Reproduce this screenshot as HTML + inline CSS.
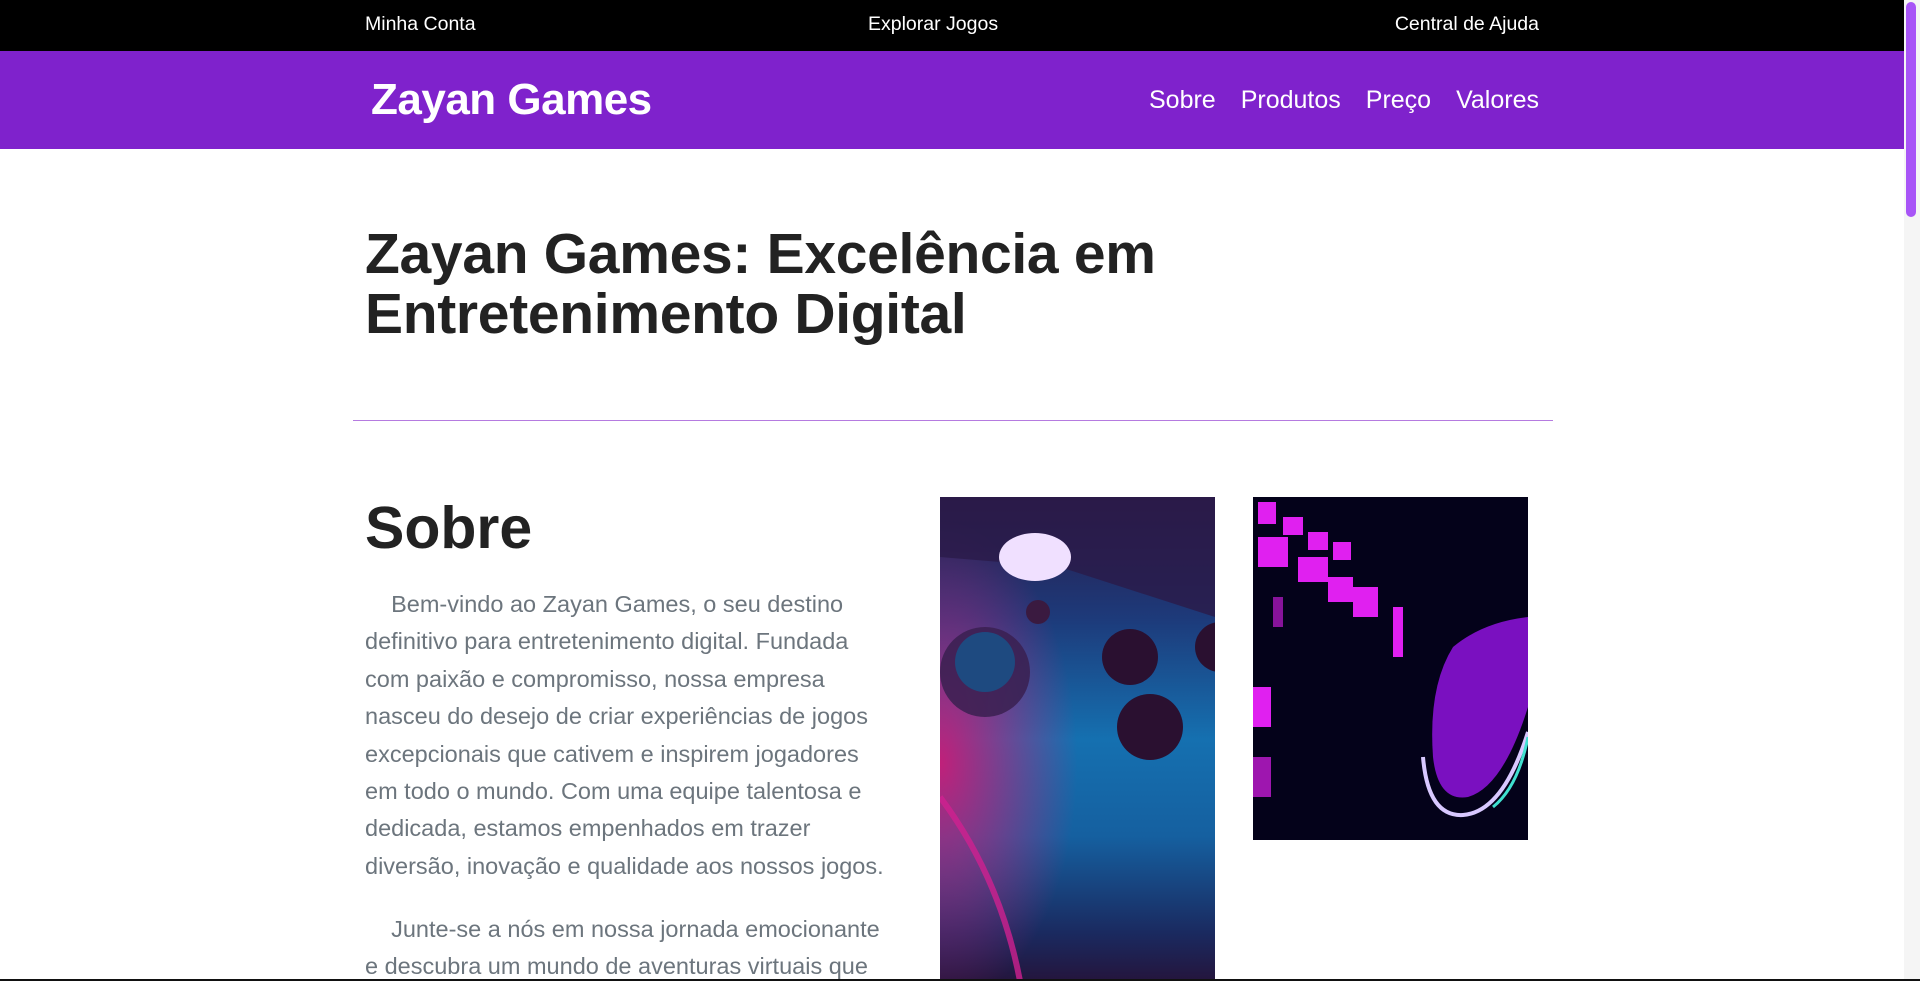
<!DOCTYPE html>
<html><head><meta charset="utf-8"><style>
*{margin:0;padding:0;box-sizing:border-box}
html,body{width:1920px;height:981px;overflow:hidden;background:#fff;font-family:"Liberation Sans",sans-serif}
.top{position:absolute;left:0;top:0;width:1904px;height:51px;background:#000;color:#fff;font-size:19.5px}
.top span{position:absolute;top:13px}
.hdr{position:absolute;left:0;top:51px;width:1904px;height:98px;background:#7f22cc;color:#fff}
.logo{position:absolute;left:371px;top:24px;font-size:44px;font-weight:bold;letter-spacing:-0.5px}
.nav{position:absolute;right:365px;top:35px;font-size:25px;display:flex;gap:25px}
h1{position:absolute;left:365px;top:224px;font-size:57px;line-height:60px;color:#222;font-weight:bold;letter-spacing:-0.3px}
.hr{position:absolute;left:353px;top:420px;width:1200px;height:1px;background:#b57be0}
h2{position:absolute;left:365px;top:493px;font-size:59px;line-height:70px;color:#222;font-weight:bold}
.p{position:absolute;left:365px;font-size:23.5px;line-height:37.4px;color:#6c757d;white-space:nowrap}
.img1{position:absolute;left:940px;top:497px;width:275px;height:484px;overflow:hidden;
background:linear-gradient(180deg,#2a1a48 0%,#1d3a7a 25%,#1570b0 50%,#1560a0 70%,#1a2a60 90%,#24153d 100%)}
.img2{position:absolute;left:1253px;top:497px;width:275px;height:343px;overflow:hidden;background:#04021a}
.sb{position:absolute;left:1904px;top:0;width:16px;height:981px;background:#f5f5f5}
.thumb{position:absolute;left:1906px;top:2px;width:10px;height:215px;border-radius:5px;background:#a855f7}
.bot{position:absolute;left:0;top:979px;width:1920px;height:2px;background:#111}
</style></head><body>
<div class="top"><span style="left:365px">Minha Conta</span><span style="left:868px">Explorar Jogos</span><span style="right:365px">Central de Ajuda</span></div>
<div class="hdr"><div class="logo">Zayan Games</div><div class="nav"><span>Sobre</span><span>Produtos</span><span>Preço</span><span>Valores</span></div></div>
<h1>Zayan Games: Excelência em<br>Entretenimento Digital</h1>
<div class="hr"></div>
<h2>Sobre</h2>
<div class="p" style="top:586px">&nbsp;&nbsp;&nbsp;&nbsp;Bem-vindo ao Zayan Games, o seu destino<br>definitivo para entretenimento digital. Fundada<br>com paixão e compromisso, nossa empresa<br>nasceu do desejo de criar experiências de jogos<br>excepcionais que cativem e inspirem jogadores<br>em todo o mundo. Com uma equipe talentosa e<br>dedicada, estamos empenhados em trazer<br>diversão, inovação e qualidade aos nossos jogos.</div>
<div class="p" style="top:911px">&nbsp;&nbsp;&nbsp;&nbsp;Junte-se a nós em nossa jornada emocionante<br>e descubra um mundo de aventuras virtuais que</div>
<div class="img1"><svg width="275" height="484">
<defs><radialGradient id="g1" cx="0" cy="0.55" r="0.5"><stop offset="0" stop-color="#c0207a"/><stop offset="1" stop-color="#c0207a" stop-opacity="0"/></radialGradient></defs>
<rect width="275" height="484" fill="url(#g1)"/>
<polygon points="0,0 275,0 275,120 120,70 0,60" fill="#2a1a48" opacity="0.8"/>
<ellipse cx="95" cy="60" rx="36" ry="24" fill="#f0e0ff"/>
<circle cx="98" cy="115" r="12" fill="#3a1a40"/>
<circle cx="45" cy="175" r="45" fill="#3a2050" opacity=".85"/>
<circle cx="45" cy="165" r="30" fill="#1e4a80"/>
<circle cx="190" cy="160" r="28" fill="#2a1030"/>
<circle cx="210" cy="230" r="33" fill="#2a1030"/>
<circle cx="280" cy="150" r="25" fill="#2a1030"/>
<path d="M0,300 Q60,380 80,484" stroke="#d02090" stroke-width="6" fill="none" opacity="0.8"/>
</svg></div>
<div class="img2"><svg width="275" height="343">
<g fill="#e020f0">
<rect x="5" y="5" width="18" height="22"/><rect x="30" y="20" width="20" height="18"/><rect x="55" y="35" width="20" height="18"/><rect x="80" y="45" width="18" height="18"/>
<rect x="5" y="40" width="30" height="30"/><rect x="45" y="60" width="30" height="25"/><rect x="75" y="80" width="25" height="25"/><rect x="100" y="90" width="25" height="30"/>
<rect x="140" y="110" width="10" height="50"/><rect x="20" y="100" width="10" height="30" opacity=".6"/>
<rect x="0" y="190" width="18" height="40"/><rect x="0" y="260" width="18" height="40" opacity=".7"/>
</g>
<path d="M275,210 Q250,290 215,300 Q185,305 180,260 Q175,190 200,150 Q230,125 275,120 Z" fill="#7a10c0"/>
<path d="M275,235 Q250,315 210,318 Q175,320 170,260" stroke="#d8c8ff" stroke-width="4" fill="none"/>
<path d="M275,240 Q265,290 240,310" stroke="#40e0d0" stroke-width="3" fill="none"/>
</svg></div>
<div class="sb"></div><div class="thumb"></div>
<div class="bot"></div>
</body></html>
